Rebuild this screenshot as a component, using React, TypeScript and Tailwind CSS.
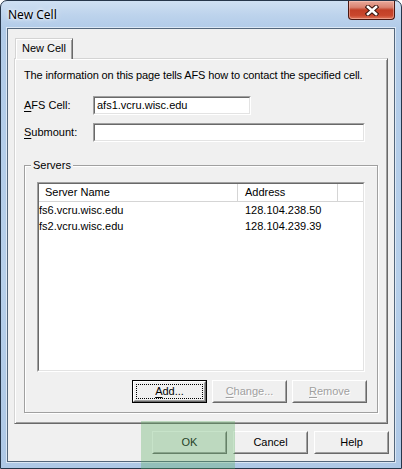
import type { ReactNode } from "react";

function Raised({ children, className = "", disabled = false }: { children: ReactNode; className?: string; disabled?: boolean }) {
  return (
    <div
      className={`h-[23px] w-[75px] border border-t-white border-l-white border-r-[#696969] border-b-[#696969] bg-[#f0f0f0] ${className}`}
    >
      <div
        className={`flex h-full w-full items-center justify-center border border-t-[#f0f0f0] border-l-[#f0f0f0] border-r-[#a0a0a0] border-b-[#a0a0a0] ${
          disabled ? "text-[#a0a0a0] [text-shadow:1px_1px_0_#fff]" : ""
        }`}
      >
        {children}
      </div>
    </div>
  );
}

function DefaultButton({ children }: { children: ReactNode }) {
  return (
    <div className="h-[23px] w-[75px] border border-black">
      <div className="h-full w-full border border-t-white border-l-white border-r-[#696969] border-b-[#696969] bg-[#f0f0f0]">
        <div className="h-full w-full border border-t-[#f0f0f0] border-l-[#f0f0f0] border-r-[#a0a0a0] border-b-[#a0a0a0] p-[1px]">
          <div className="flex h-full w-full items-center justify-center border border-dotted border-black">
            {children}
          </div>
        </div>
      </div>
    </div>
  );
}

function Sunken({ className = "", children }: { className?: string; children?: ReactNode }) {
  return (
    <div className={`border border-t-[#a0a0a0] border-l-[#a0a0a0] border-r-white border-b-white ${className}`}>
      <div className="h-full w-full overflow-hidden border border-t-[#696969] border-l-[#696969] border-r-[#e3e3e3] border-b-[#e3e3e3] bg-white">
        {children}
      </div>
    </div>
  );
}

function CloseButton() {
  return (
    <div className="mr-[6px] flex h-[19px] w-[47px] items-center justify-center rounded-b-[4px] border border-t-0 border-[#4a1710] bg-[linear-gradient(180deg,#e9a99b_0%,#d98371_35%,#c23f26_50%,#c9472d_80%,#e0775c_100%)] shadow-[inset_0_0_0_1px_rgba(255,210,200,0.45)]">
      <svg width="14" height="11" viewBox="0 0 14 11">
        <path d="M3 2 L11 9 M11 2 L3 9" stroke="#3b1610" strokeWidth="4.6" strokeLinecap="square" />
        <path d="M3 2 L11 9 M11 2 L3 9" stroke="#ffffff" strokeWidth="2.6" strokeLinecap="square" />
      </svg>
    </div>
  );
}

const servers = [
  { name: "fs6.vcru.wisc.edu", address: "128.104.238.50" },
  { name: "fs2.vcru.wisc.edu", address: "128.104.239.39" },
];

export default function App() {
  return (
    <div className="relative h-[469px] w-[402px] [font-family:'Liberation_Sans',Tahoma,Arial,sans-serif] text-[11px] text-black">
      <div className="flex h-full w-full flex-col overflow-hidden rounded-t-[7px] border border-[#26364a] bg-[linear-gradient(180deg,#cfe0f2_0px,#bdd3ec_14px,#b1cbe8_28px,#b6cfea_60%,#aec8e6_100%)]">
        {/* title bar */}
        <div className="flex h-[27px] shrink-0 items-start justify-between">
          <span className="pl-[7px] pt-[6px] [font-family:'Noto_Sans',sans-serif] text-[12px] leading-[16px] [text-shadow:0_0_6px_#fff,0_0_3px_#fff]">
            New Cell
          </span>
          <CloseButton />
        </div>

        {/* client area */}
        <div className="mx-[6px] flex h-[434px] shrink-0 flex-col border border-[#53667b] bg-[#f0f0f0] shadow-[0_0_0_1px_rgba(255,255,255,0.55)]">
          {/* tab strip */}
          <div className="flex pl-[7px] pt-[9px]">
            <div className="relative z-10 -mb-px flex h-[21px] w-[58px] items-start justify-center border border-b-0 border-t-[#d4d4d4] border-l-[#d4d4d4] border-r-[#696969] bg-[#f0f0f0] pt-[2px] leading-[14px] shadow-[inset_1px_1px_0_#fff,inset_-1px_0_0_#a0a0a0]">
              New Cell
            </div>
          </div>

          {/* tab page */}
          <div className="mx-[6px] flex h-[366px] flex-col border border-t-[#d4d4d4] border-l-[#d4d4d4] border-r-[#696969] border-b-[#696969] shadow-[inset_1px_1px_0_#fff,inset_-1px_-1px_0_#a0a0a0]">
            <p className="pl-[9px] pt-[9px] leading-[14px] tracking-[-0.12px]">
              The information on this page tells AFS how to contact the specified cell.
            </p>

            <div className="mt-[14px] flex items-center pl-[9px]">
              <span className="w-[69px]">
                <span className="underline underline-offset-2">A</span>FS Cell:
              </span>
              <Sunken className="h-[19px] w-[158px]">
                <div className="pl-[2px] leading-[15px]">afs1.vcru.wisc.edu</div>
              </Sunken>
            </div>

            <div className="mt-[8px] flex items-center pl-[9px]">
              <span className="w-[69px]">
                <span className="underline underline-offset-2">S</span>ubmount:
              </span>
              <Sunken className="h-[19px] w-[272px]" />
            </div>

            {/* Servers group */}
            <div className="relative mx-[9px] mt-[23px] flex flex-col border border-[#a0a0a0] shadow-[1px_1px_0_#fff,inset_1px_1px_0_#fff]">
              <span className="absolute left-[6px] top-[-8px] bg-[#f0f0f0] px-[2px] leading-[14px]">Servers</span>

              <Sunken className="mx-[12px] mt-[16px] h-[190px]">
                <div className="flex h-[18px] border-b border-[#d5d5d5]">
                  <div className="w-[199px] border-r border-[#d5d5d5] pl-[6px] leading-[17px]">Server Name</div>
                  <div className="w-[100px] border-r border-[#d5d5d5] pl-[7px] leading-[17px]">Address</div>
                </div>
                {servers.map((s) => (
                  <div key={s.name} className="flex h-[16px] items-center">
                    <div className="w-[199px]">{s.name}</div>
                    <div className="pl-[7px]">{s.address}</div>
                  </div>
                ))}
              </Sunken>

              <div className="mt-[8px] flex justify-end gap-[5px] pb-[9px] pr-[10px]">
                <DefaultButton>
                  <span>
                    <span className="underline underline-offset-2">A</span>dd...
                  </span>
                </DefaultButton>
                <Raised disabled>
                  <span>
                    <span className="underline underline-offset-2">C</span>hange...
                  </span>
                </Raised>
                <Raised disabled>
                  <span>
                    <span className="underline underline-offset-2">R</span>emove
                  </span>
                </Raised>
              </div>
            </div>
          </div>

          {/* dialog buttons */}
          <div className="mt-[7px] flex justify-end gap-[6px] pr-[5px]">
            <Raised>OK</Raised>
            <Raised>Cancel</Raised>
            <Raised>Help</Raised>
          </div>
        </div>
      </div>

      {/* highlight overlay */}
      <div className="pointer-events-none absolute left-[141px] top-[421px] h-[48px] w-[94px] bg-[#5fae64]/35" />
    </div>
  );
}
